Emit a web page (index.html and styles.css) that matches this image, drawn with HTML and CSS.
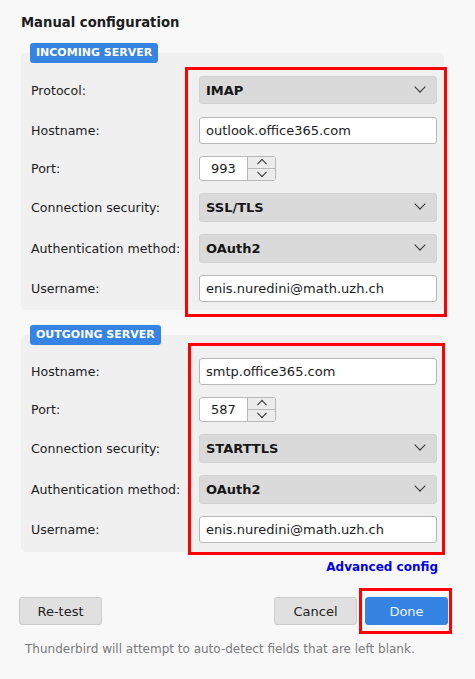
FILE: index.html
```html
<!DOCTYPE html>
<html>
<head>
    <title>Manual configuration</title>
    <link rel="stylesheet" href="styles.css">
</head>
<body>
    <div class="dialog">
        <h1 class="dialog-title">Manual configuration</h1>

        <section class="server server-incoming">
            <div class="server-badge">Incoming server</div>
            <div class="server-panel">
                <div class="server-labels">
                    <div class="row">Protocol:</div>
                    <div class="row">Hostname:</div>
                    <div class="row row-port">Port:</div>
                    <div class="row row-security">Connection security:</div>
                    <div class="row">Authentication method:</div>
                    <div class="row">Username:</div>
                </div>
                <div class="server-fields">
                    <div class="row">
                        <div class="select select-tall">IMAP <span class="chevron"></span></div>
                    </div>
                    <div class="row">
                        <div class="text-input">outlook.office365.com</div>
                    </div>
                    <div class="row row-port">
                        <div class="spin">
                            <span class="spin-value">993</span>
                            <span class="spin-buttons">
                                <span class="spin-btn spin-up"></span>
                                <span class="spin-btn spin-down"></span>
                            </span>
                        </div>
                    </div>
                    <div class="row row-security">
                        <div class="select">SSL/TLS <span class="chevron"></span></div>
                    </div>
                    <div class="row">
                        <div class="select">OAuth2 <span class="chevron"></span></div>
                    </div>
                    <div class="row">
                        <div class="text-input">enis.nuredini@math.uzh.ch</div>
                    </div>
                </div>
            </div>
        </section>

        <section class="server server-outgoing">
            <div class="server-badge">Outgoing server</div>
            <div class="server-panel">
                <div class="server-labels">
                    <div class="row">Hostname:</div>
                    <div class="row row-port">Port:</div>
                    <div class="row row-security">Connection security:</div>
                    <div class="row">Authentication method:</div>
                    <div class="row">Username:</div>
                </div>
                <div class="server-fields">
                    <div class="row">
                        <div class="text-input">smtp.office365.com</div>
                    </div>
                    <div class="row row-port">
                        <div class="spin">
                            <span class="spin-value">587</span>
                            <span class="spin-buttons">
                                <span class="spin-btn spin-up"></span>
                                <span class="spin-btn spin-down"></span>
                            </span>
                        </div>
                    </div>
                    <div class="row row-security">
                        <div class="select">STARTTLS <span class="chevron"></span></div>
                    </div>
                    <div class="row">
                        <div class="select">OAuth2 <span class="chevron"></span></div>
                    </div>
                    <div class="row">
                        <div class="text-input">enis.nuredini@math.uzh.ch</div>
                    </div>
                </div>
            </div>
        </section>

        <div class="advanced">
            <a class="advanced-link" href="#">Advanced config</a>
        </div>

        <div class="actions">
            <button class="btn">Re-test</button>
            <div class="actions-right">
                <button class="btn">Cancel</button>
                <div class="highlight">
                    <button class="btn btn-primary">Done</button>
                </div>
            </div>
        </div>

        <p class="hint">Thunderbird will attempt to auto-detect fields that are left blank.</p>
    </div>
</body>
</html>
```

FILE: styles.css
```css
body {
    margin: 0;
    background: #f8f8f8;
    font-family: 'DejaVu Sans', Verdana, sans-serif;
    font-size: 13px;
    color: #1c1c1c;
}

.dialog {
    width: 423px;
    padding: 14px 0 0 21px;
}

.dialog-title {
    margin: 0 0 11px;
    font-size: 13.2px;
    font-weight: bold;
    line-height: 18px;
}

/* server sections */

.server-badge {
    position: relative;
    z-index: 1;
    display: inline-block;
    margin-left: 9px;
    padding: 0 6px;
    height: 20px;
    line-height: 20px;
    background: #3584e4;
    color: white;
    border-radius: 3px;
    font-size: 11px;
    font-weight: bold;
    text-transform: uppercase;
}

.server-panel {
    display: flex;
    margin-top: -10px;
    padding-left: 10px;
    background: #f0f0f0;
    border-radius: 5px;
}

.server-labels {
    display: flex;
    flex-direction: column;
    font-size: 12.6px;
    white-space: nowrap;
}

.server-fields {
    flex: 1;
    display: flex;
    flex-direction: column;
    border: 3px solid #ff0000;
}

.row {
    height: 40px;
    flex-shrink: 0;
    display: flex;
    align-items: center;
}

.row-port {
    height: 36px;
}

.row-security {
    height: 42px;
}

.server-incoming .server-panel {
    padding-top: 14px;
}

.server-incoming .server-labels {
    width: 154px;
    padding-top: 3px;
}

.server-incoming .server-fields {
    padding: 0 7px 6px 11px;
    margin: 0 -3px -7px 0;
}

.server-outgoing {
    margin-top: 15px;
}

.server-outgoing .server-panel {
    padding-top: 8px;
}

.server-outgoing .server-labels {
    width: 157px;
    padding-top: 8px;
}

.server-outgoing .server-fields {
    padding: 5px 5px 3px 8px;
    margin: 0 -1px -3px 0;
}

/* form controls */

.select {
    flex: 1;
    box-sizing: border-box;
    height: 29px;
    display: flex;
    align-items: center;
    justify-content: space-between;
    padding: 0 12px 0 6px;
    background: #dadada;
    border: 1px solid #d2d2d2;
    border-radius: 3px;
    font-weight: bold;
    color: #161616;
}

.select-tall {
    height: 28px;
}

.chevron {
    width: 7px;
    height: 7px;
    border-right: 1.3px solid #333;
    border-bottom: 1.3px solid #333;
    transform: translateY(-3px) rotate(45deg);
}

.text-input {
    flex: 1;
    box-sizing: border-box;
    height: 27px;
    line-height: 25px;
    padding: 0 6px;
    background: white;
    border: 1px solid #b8b8b8;
    border-radius: 3px;
}

.spin {
    display: flex;
    box-sizing: border-box;
    width: 77px;
    height: 25px;
    background: white;
    border: 1px solid #b8b8b8;
    border-radius: 3px;
    overflow: hidden;
}

.spin-value {
    width: 47px;
    line-height: 23px;
    text-align: center;
}

.spin-buttons {
    flex: 1;
    display: flex;
    flex-direction: column;
    border-left: 1px solid #b8b8b8;
    background: #ececec;
}

.spin-btn {
    flex: 1;
    position: relative;
}

.spin-up {
    border-bottom: 1px solid #b8b8b8;
}

.spin-btn::after {
    content: '';
    position: absolute;
    left: 50%;
    top: 50%;
    width: 6px;
    height: 6px;
    border-left: 1.2px solid #333;
    border-top: 1.2px solid #333;
}

.spin-up::after {
    transform: translate(-50%, -25%) rotate(45deg);
}

.spin-down::after {
    transform: translate(-50%, -75%) rotate(225deg);
}

/* footer */

.advanced {
    display: flex;
    justify-content: flex-end;
    margin: 8px 6px 0 0;
}

.advanced-link {
    color: #0000e6;
    font-size: 12px;
    font-weight: bold;
    text-decoration: none;
    line-height: 14px;
}

.actions {
    display: flex;
    justify-content: space-between;
    align-items: center;
    margin: 14px -8px 0 -2px;
}

.actions-right {
    display: flex;
    align-items: center;
    gap: 2px;
}

.btn {
    width: 83px;
    height: 28px;
    font-family: inherit;
    font-size: 13px;
    color: #222;
    background: #e0e0e0;
    border: 1px solid #cdcdcd;
    border-radius: 3px;
}

.btn-primary {
    background: #3584e4;
    border-color: #3584e4;
    color: #eef4fc;
}

.highlight {
    padding: 6px 1px 6px 3px;
    border: 3px solid #ff0000;
}

.hint {
    margin: 8px 0 0 4px;
    font-size: 12px;
    color: #7a7a7a;
}
```
